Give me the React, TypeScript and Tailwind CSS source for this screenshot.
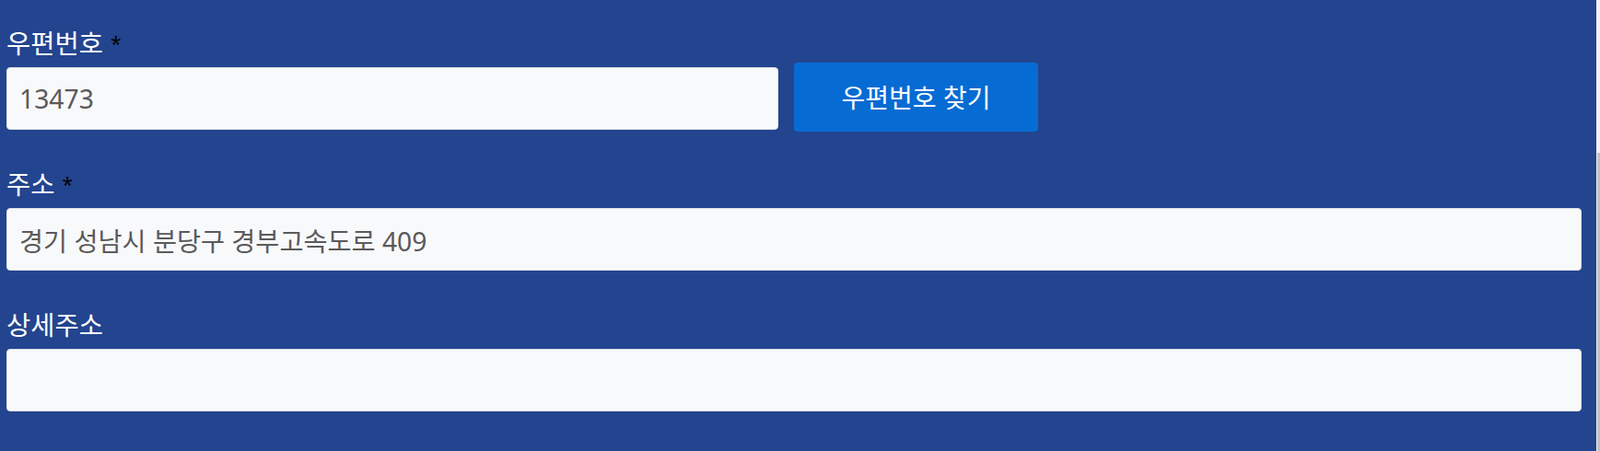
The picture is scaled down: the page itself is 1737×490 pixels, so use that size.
import React from "react";

const font = { fontFamily: '"Noto Sans", "Noto Sans CJK KR", sans-serif' };

function Label({ text, required }: { text: string; required?: boolean }) {
  return (
    <label className="block h-[36px] leading-[36px] text-[28.5px] text-white mb-[8px]">
      {text}
      {required && <span className="text-black text-[21px] ml-[8px] align-[3px]">*</span>}
    </label>
  );
}

function Field({ value }: { value: string }) {
  return (
    <input
      readOnly
      value={value}
      className="block w-full h-[68px] rounded-[4px] border border-[#dee2e6] bg-[#f8f9fa] px-[13px] text-[28.3px] text-[#5a5a5a] outline-none"
      style={font}
    />
  );
}

export default function App() {
  return (
    <div className="flex w-[1737px] h-[490px] overflow-hidden" style={font}>
      <div className="w-[1733px] h-full bg-[#23448f] pl-[7px] pr-[16px] pt-[29px]">
        <div className="mb-[41px]">
          <Label text="우편번호" required />
          <div className="flex items-center h-[68px] gap-[17px]">
            <div className="w-[838px]">
              <Field value="13473" />
            </div>
            <button className="shrink-0 w-[265px] h-[75px] mb-[3px] rounded-[4px] bg-[#066bd3] text-white text-[28px]">
              우편번호 찾기
            </button>
          </div>
        </div>
        <div className="mb-[41px]">
          <Label text="주소" required />
          <Field value="경기 성남시 분당구 경부고속도로 409" />
        </div>
        <div>
          <Label text="상세주소" />
          <Field value="" />
        </div>
      </div>
      <div className="w-[4px] h-full bg-[#f1f1f1] pl-[1px] flex flex-col">
        <div className="h-[166px]" />
        <div className="flex-1 w-[3px] bg-[#c1c1c1]" />
      </div>
    </div>
  );
}
